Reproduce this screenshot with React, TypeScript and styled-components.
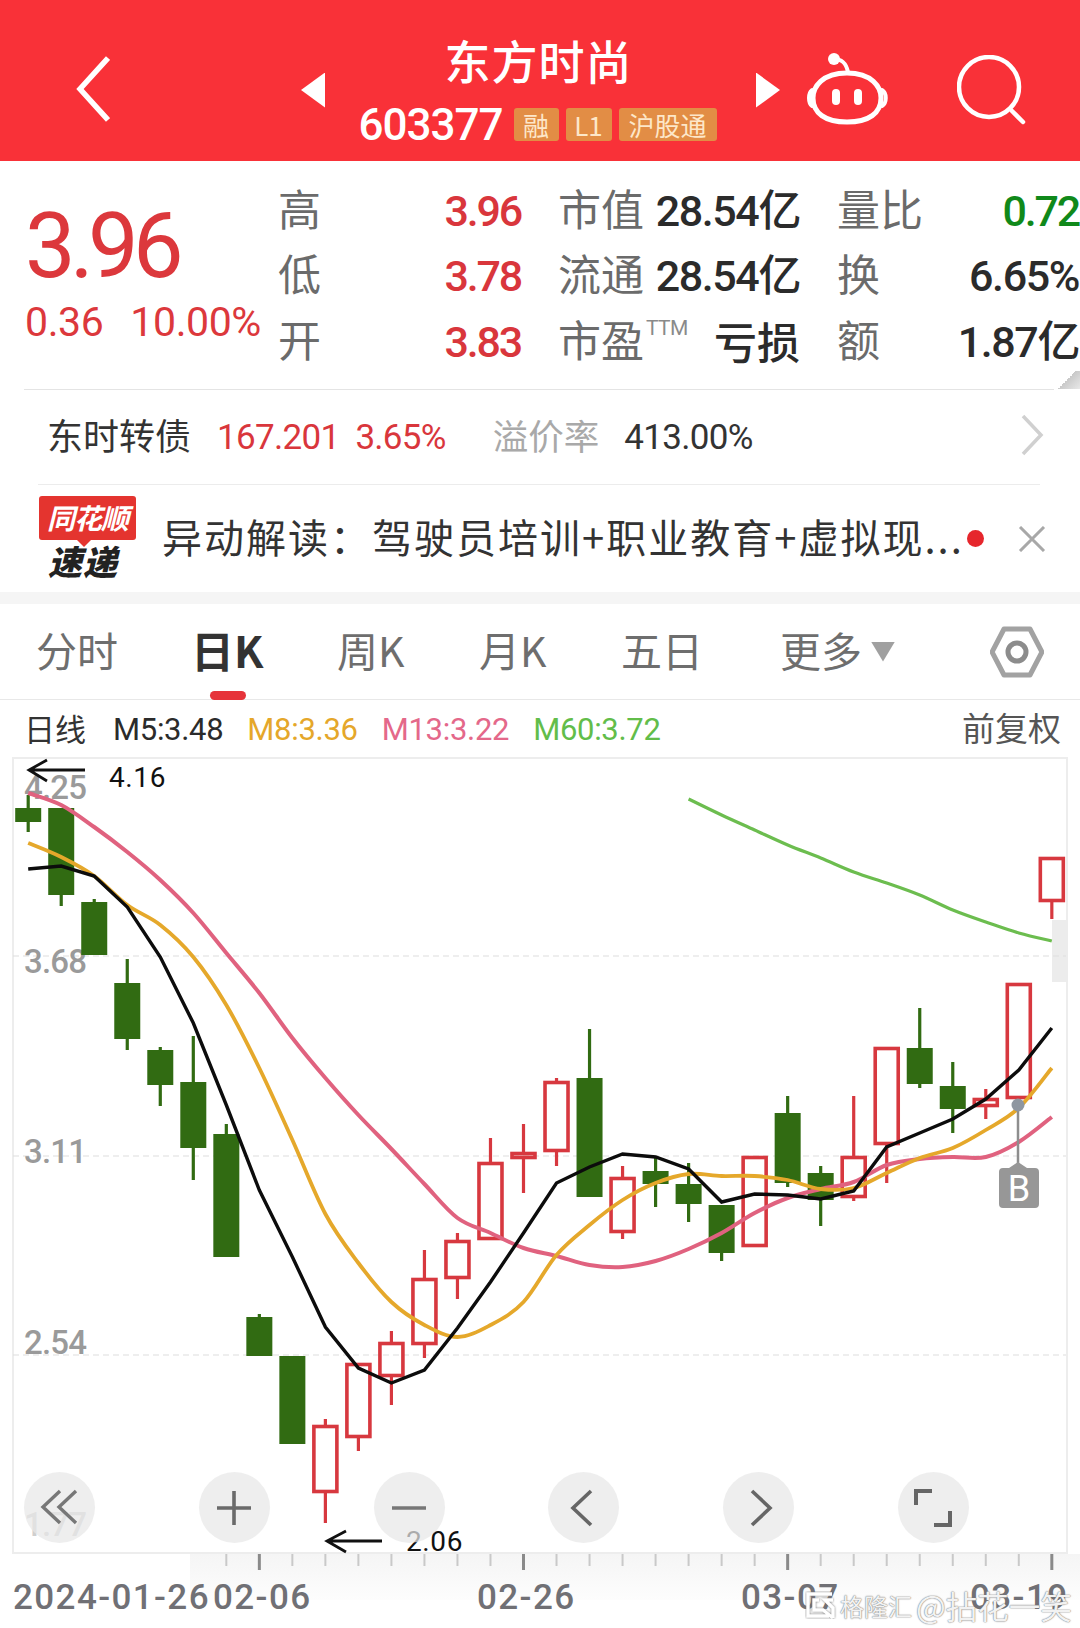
import React from "react";
import styled, { createGlobalStyle } from "styled-components";

const CJK = `"Noto Sans CJK SC", "Noto Sans", sans-serif`;
const NUM = `Roboto, "Noto Sans CJK SC", sans-serif`;
const RED = "#d9363c";

const Global = createGlobalStyle`
  html, body { margin: 0; padding: 0; background: #fff; }
  body { width: 1080px; height: 1628px; overflow: hidden; font-family: ${CJK}; }
`;

const Page = styled.div`
  width: 1080px;
  height: 1628px;
  position: relative;
  overflow: hidden;
  background: #fff;
`;

/* ---------- header ---------- */
const Header = styled.header`
  height: 161px;
  box-sizing: border-box;
  padding: 16px 0 0 76px;
  background: #f93138;
  display: flex;
  align-items: center;
  color: #fff;
`;
const BackIcon = styled.svg`
  width: 34px;
  height: 66px;
  margin-right: 191px;
  flex: none;
`;
const Triangle = styled.div<{ $dir: "l" | "r" }>`
  width: 24px;
  height: 35px;
  flex: none;
  margin-top: 3px;
  background: #fff;
  clip-path: ${(p) => (p.$dir === "l" ? "polygon(100% 0, 0 50%, 100% 100%)" : "polygon(0 0, 100% 50%, 0 100%)")};
`;
const TitleBlock = styled.div`
  width: 431px;
  flex: none;
  display: flex;
  flex-direction: column;
  align-items: center;
  margin-top: -3px;
`;
const Title = styled.div`
  font-size: 46px;
  line-height: 52px;
  letter-spacing: 1px;
  font-weight: 500;
  margin-left: -4px;
`;
const CodeRow = styled.div`
  display: flex;
  align-items: center;
  margin-top: 23px;
  height: 34px;
  margin-left: 1px;
`;
const Code = styled.span`
  font-family: ${NUM};
  font-size: 44px;
  font-weight: 500;
  letter-spacing: -1px;
  margin-right: 11px;
  line-height: 34px;
`;
const Badge = styled.span<{ $w: number }>`
  width: ${(p) => p.$w}px;
  height: 33px;
  margin-right: 7px;
  background: #e28d45;
  border-radius: 3px;
  color: #fde7c9;
  font-size: 26px;
  line-height: 33px;
  text-align: center;
  white-space: nowrap;
`;
const RobotIcon = styled.svg`
  width: 82px;
  height: 75px;
  margin-left: 26px;
  margin-top: 4px;
  flex: none;
`;
const SearchIcon = styled.svg`
  width: 70px;
  height: 70px;
  margin-left: 69px;
  margin-top: 2px;
  flex: none;
`;

/* ---------- quote ---------- */
const Quote = styled.section`
  position: relative;
  height: 228px;
  display: flex;
`;
const PriceCol = styled.div`
  width: 280px;
  flex: none;
  box-sizing: border-box;
  padding: 44px 0 0 25px;
  color: #dc383c;
  font-family: ${NUM};
`;
const BigPrice = styled.div`
  font-size: 90px;
  line-height: 84px;
  letter-spacing: -5.6px;
`;
const PriceSub = styled.div`
  display: flex;
  gap: 27px;
  font-size: 41px;
  line-height: 48px;
  letter-spacing: -0.4px;
  margin-top: 9px;
  white-space: nowrap;
`;
const Stats = styled.div`
  display: grid;
  grid-template-columns: 241px 240px 240px;
  grid-auto-rows: 65.5px;
  column-gap: 39px;
  padding-top: 16px;
`;
const Stat = styled.div`
  display: flex;
  justify-content: space-between;
  align-items: center;
  white-space: nowrap;
`;
const StatLabel = styled.span`
  font-size: 43px;
  color: #6b6b6b;
  display: flex;
  align-items: flex-start;
  line-height: 50px;
  margin: -6px 0 0 -2px;
`;
const Sup = styled.sup`
  font-family: ${NUM};
  font-size: 21px;
  line-height: 24px;
  color: #8a8a8a;
  margin: 3px 0 0 2px;
  vertical-align: baseline;
  letter-spacing: -0.6px;
`;
const StatValue = styled.span<{ $c?: string }>`
  font-family: ${NUM};
  font-size: 43px;
  font-weight: 500;
  line-height: 50px;
  margin-top: 2px;
  letter-spacing: ${(p) => (p.$c ? "-2.2px" : "-1.4px")};
  color: ${(p) => p.$c || "#2b2b2b"};
`;
const StatText = styled.span`
  font-size: 43px;
  font-weight: 500;
  line-height: 50px;
  margin-top: -2px;
  color: #2b2b2b;
`;
const CornerFold = styled.div`
  position: absolute;
  right: 0;
  bottom: 0;
  width: 26px;
  height: 18px;
  background: linear-gradient(135deg, #fff 50%, #c9c9c9 50%, #e8e8e8 100%);
`;

/* ---------- bond ---------- */
const BondRow = styled.div`
  margin: 0 26px 0 24px;
  border-top: 1px solid #e4e4e4;
  height: 95px;
  box-sizing: border-box;
  display: flex;
  align-items: center;
  padding-left: 23px;
  white-space: nowrap;
`;
const BondName = styled.span`
  font-size: 36px;
  color: #333;
  margin: -6px 26px 0 0;
`;
const BondNum = styled.span<{ $c: string; $mr: number }>`
  font-family: ${NUM};
  font-size: 35px;
  letter-spacing: -0.7px;
  color: ${(p) => p.$c};
  margin-right: ${(p) => p.$mr}px;
`;
const BondGray = styled.span`
  font-size: 35.5px;
  color: #a9a9a9;
  margin: -6px 25px 0 0;
`;
const BondChevron = styled.svg`
  width: 24px;
  height: 42px;
  margin: -4px 10px 0 auto;
`;

/* ---------- news ---------- */
const NewsWrap = styled.div`
  height: 108px;
  box-sizing: border-box;
  margin: 0 40px 0 38px;
  border-top: 1px solid #ececec;
  display: flex;
  align-items: center;
  position: relative;
`;
const Logo = styled.div`
  width: 100px;
  flex: none;
  display: flex;
  flex-direction: column;
  align-items: center;
  margin-right: 24px;
  margin-top: -3px;
`;
const LogoFlag = styled.div`
  position: relative;
  width: 97px;
  height: 44px;
  margin-left: -1px;
  background: #e4342f;
  border-radius: 3px;
  color: #fff;
  font-size: 28px;
  font-weight: 700;
  font-style: italic;
  line-height: 42px;
  text-align: center;
  white-space: nowrap;
  letter-spacing: -1px;
  &::after {
    content: "";
    position: absolute;
    left: 38px;
    bottom: -7px;
    border: 7px solid transparent;
    border-bottom: 0;
    border-top-color: #e4342f;
  }
`;
const LogoBottom = styled.div`
  font-size: 34px;
  font-weight: 900;
  font-style: italic;
  color: #222;
  line-height: 34px;
  letter-spacing: 1px;
  margin-top: 4px;
  margin-left: -10px;
`;
const NewsText = styled.div`
  font-size: 40px;
  letter-spacing: 2px;
  color: #333;
  white-space: nowrap;
  width: 803px;
  flex: none;
  margin-top: -6px;
`;
const RedDot = styled.div`
  width: 17px;
  height: 17px;
  border-radius: 50%;
  background: #e6262c;
  flex: none;
  margin-left: 2px;
`;
const CloseIcon = styled.svg`
  width: 28px;
  height: 26px;
  flex: none;
  margin-left: 34px;
`;
const Band = styled.div`
  height: 12px;
  background: #f5f5f5;
`;

/* ---------- tabs ---------- */
const Tabs = styled.nav`
  height: 96px;
  box-sizing: border-box;
  border-bottom: 1px solid #e8e8e8;
  display: grid;
  grid-template-columns: 158px 143px 142px 142px 159px 210px 1fr;
  padding-left: 36px;
  align-items: center;
  position: relative;
`;
const Tab = styled.div<{ $active?: boolean }>`
  font-size: ${(p) => (p.$active ? 43 : 41)}px;
  line-height: 50px;
  margin: -5px 0 0 ${(p) => (p.$active ? -3 : 0)}px;
  white-space: nowrap;
  position: relative;
  display: flex;
  align-items: center;
  font-weight: ${(p) => (p.$active ? 700 : 400)};
  color: ${(p) => (p.$active ? "#333" : "#6e6e6e")};
`;
const TabIndicator = styled.div`
  position: absolute;
  left: 19px;
  top: 67px;
  width: 36px;
  height: 9px;
  border-radius: 5px;
  background: #e6333a;
`;
const Caret = styled.div`
  width: 24px;
  height: 20px;
  margin: 5px 0 0 9px;
  background: #a0a0a0;
  clip-path: polygon(0 0, 100% 0, 50% 100%);
`;
const HexIcon = styled.svg`
  width: 54px;
  height: 52px;
`;

/* ---------- legend ---------- */
const Legend = styled.div`
  height: 50px;
  display: flex;
  align-items: center;
  padding: 8px 19px 0 24px;
  box-sizing: border-box;
  white-space: nowrap;
`;
const LegendName = styled.span`
  font-size: 31px;
  color: #333;
  margin: -4px 27px 0 0;
`;
const LegendItem = styled.span<{ $c: string }>`
  font-family: ${NUM};
  font-size: 31px;
  letter-spacing: -0.3px;
  color: ${(p) => p.$c};
  margin-right: 24px;
`;
const LegendRight = styled.span`
  font-size: 33px;
  color: #555;
  margin: -4px 0 0 auto;
`;

/* ---------- chart ---------- */
const ChartArea = styled.div`
  position: relative;
  height: 878px;
`;
const ChartSvg = styled.svg`
  display: block;
  width: 1080px;
  height: 878px;
`;
const Controls = styled.div`
  position: absolute;
  left: 24px;
  top: 722px;
  width: 945px;
  display: flex;
  justify-content: space-between;
`;
const Ctrl = styled.div`
  width: 71px;
  height: 71px;
  border-radius: 50%;
  background: rgba(232, 232, 232, 0.72);
  display: flex;
  align-items: center;
  justify-content: center;
`;
const CtrlIcon = styled.svg`
  width: 40px;
  height: 40px;
`;
const Watermark = styled.div`
  position: absolute;
  left: 805px;
  top: 840px;
  height: 30px;
  display: flex;
  align-items: center;
  color: rgba(255, 255, 255, 0.92);
  text-shadow: 0 0 1.5px #777, 0 0 1px #888;
  white-space: nowrap;
`;
const WmSvg = styled.svg`
  width: 32px;
  height: 28px;
  margin-right: 3px;
`;
const WmSmall = styled.span`
  font-size: 24px;
`;
const WmLarge = styled.span`
  font-size: 31.5px;
  margin-left: 4px;
`;

/* ---------- data ---------- */
type C = [number, number, number, number, "g" | "r"];
const candles: C[] = [
  [808, 822, 795, 832, "g"],
  [808, 895, 808, 906, "g"],
  [902, 955, 899, 955, "g"],
  [983, 1039, 959, 1050, "g"],
  [1050, 1085, 1047, 1106, "g"],
  [1082, 1148, 1036, 1180, "g"],
  [1134, 1257, 1124, 1257, "g"],
  [1317, 1356, 1314, 1356, "g"],
  [1356, 1444, 1356, 1444, "g"],
  [1425, 1493, 1419, 1523, "r"],
  [1363, 1438, 1363, 1451, "r"],
  [1342, 1377, 1331, 1405, "r"],
  [1278, 1345, 1250, 1358, "r"],
  [1240, 1279, 1233, 1299, "r"],
  [1162, 1240, 1138, 1240, "r"],
  [1152, 1159, 1124, 1193, "r"],
  [1081, 1152, 1078, 1166, "r"],
  [1078, 1197, 1029, 1197, "g"],
  [1177, 1233, 1166, 1239, "r"],
  [1171, 1184, 1158, 1207, "g"],
  [1184, 1204, 1163, 1222, "g"],
  [1205, 1253, 1205, 1261, "g"],
  [1156, 1247, 1156, 1247, "r"],
  [1113, 1183, 1096, 1187, "g"],
  [1173, 1200, 1166, 1226, "g"],
  [1156, 1198, 1096, 1201, "r"],
  [1047, 1145, 1047, 1183, "r"],
  [1048, 1084, 1008, 1088, "g"],
  [1086, 1109, 1062, 1133, "g"],
  [1098, 1107, 1089, 1119, "r"],
  [983, 1099, 983, 1103, "r"],
  [857, 902, 857, 919, "r"],
];
const X = (i: number) => 28.2 + 33.02 * i;
const line = (ys: number[], start = 0) => ys.map((y, i) => `${X(i + start).toFixed(1)},${y}`).join(" ");
const smooth = (ys: number[], start = 0) => {
  const pts = ys.map((y, i) => [X(i + start), y]);
  let d = `M${pts[0][0].toFixed(1)} ${pts[0][1]}`;
  for (let i = 0; i < pts.length - 1; i++) {
    const a = pts[Math.max(i - 1, 0)];
    const b = pts[i];
    const c = pts[i + 1];
    const e = pts[Math.min(i + 2, pts.length - 1)];
    d += ` C${(b[0] + (c[0] - a[0]) / 6).toFixed(1)} ${(b[1] + (c[1] - a[1]) / 6).toFixed(1)} ${(c[0] - (e[0] - b[0]) / 6).toFixed(1)} ${(c[1] - (e[1] - b[1]) / 6).toFixed(1)} ${c[0].toFixed(1)} ${c[1]}`;
  }
  return d;
};

const black = [869, 866, 876, 907, 957, 1023, 1105, 1190, 1257, 1327, 1368, 1383, 1370, 1328, 1282, 1233, 1183, 1167, 1154, 1157, 1169, 1202, 1194, 1195, 1199, 1191, 1147, 1133, 1119, 1099, 1070, 1028];
const yellow = [843, 857, 876, 905, 925, 957, 1005, 1068, 1140, 1214, 1263, 1302, 1325, 1337, 1325, 1302, 1255, 1225, 1200, 1183, 1174, 1176, 1176, 1180, 1189, 1188, 1173, 1158, 1148, 1130, 1108, 1068];
const pink = [793, 805, 827, 852, 880, 913, 953, 993, 1038, 1078, 1115, 1149, 1184, 1218, 1233, 1248, 1256, 1265, 1267, 1261, 1249, 1233, 1213, 1198, 1189, 1182, 1165, 1159, 1157, 1157, 1142, 1117];
const green = [799, 815, 830, 845, 858, 872, 883, 895, 910, 922, 933, 941];

const yLabels: [string, number][] = [["4.25", 799], ["3.68", 973], ["3.11", 1163], ["2.54", 1354], ["1.77", 1536]];
const dates: [string, number][] = [["2024-01-26", 13], ["02-06", 213], ["02-26", 477], ["03-07", 741], ["03-19", 970]];

export default function App() {
  return (
    <Page>
      <Global />
      <Header>
        <BackIcon viewBox="0 0 34 66">
          <path d="M32 2 L4 33 L32 64" fill="none" stroke="#fff" strokeWidth="5.5" />
        </BackIcon>
        <Triangle $dir="l" />
        <TitleBlock>
          <Title>东方时尚</Title>
          <CodeRow>
            <Code>603377</Code>
            <Badge $w={45}>融</Badge>
            <Badge $w={46}>L1</Badge>
            <Badge $w={98}>沪股通</Badge>
          </CodeRow>
        </TitleBlock>
        <Triangle $dir="r" />
        <RobotIcon viewBox="806 52 82 75">
          <path d="M834 58 C842 58 846 62 848 71" fill="none" stroke="#fff" strokeWidth="4" strokeLinecap="round" />
          <circle cx="834" cy="58" r="6" fill="#fff" />
          <path d="M847 72 C872 72 881 86 881 97 C881 112 869 121 847 121 C825 121 813 112 813 97 C813 86 822 72 847 72 Z" fill="none" stroke="#fff" strokeWidth="5" />
          <path d="M812 89 C808 92 808 102 812 105 M882 89 C887 92 887 102 882 105" fill="none" stroke="#fff" strokeWidth="4" strokeLinecap="round" />
          <rect x="832" y="88" width="8" height="16" rx="4" fill="#fff" />
          <rect x="854" y="88" width="8" height="16" rx="4" fill="#fff" />
        </RobotIcon>
        <SearchIcon viewBox="957 55 70 70">
          <circle cx="989" cy="87" r="30" fill="none" stroke="#fff" strokeWidth="4.5" />
          <path d="M1012 111 L1023 122" stroke="#fff" strokeWidth="4.5" strokeLinecap="round" />
        </SearchIcon>
      </Header>

      <Quote>
        <PriceCol>
          <BigPrice>3.96</BigPrice>
          <PriceSub>
            <span>0.36</span>
            <span>10.00%</span>
          </PriceSub>
        </PriceCol>
        <Stats>
          <Stat><StatLabel>高</StatLabel><StatValue $c={RED}>3.96</StatValue></Stat>
          <Stat><StatLabel>市值</StatLabel><StatValue>28.54亿</StatValue></Stat>
          <Stat><StatLabel>量比</StatLabel><StatValue $c="#10891a">0.72</StatValue></Stat>
          <Stat><StatLabel>低</StatLabel><StatValue $c={RED}>3.78</StatValue></Stat>
          <Stat><StatLabel>流通</StatLabel><StatValue>28.54亿</StatValue></Stat>
          <Stat><StatLabel>换</StatLabel><StatValue>6.65%</StatValue></Stat>
          <Stat><StatLabel>开</StatLabel><StatValue $c={RED}>3.83</StatValue></Stat>
          <Stat><StatLabel>市盈<Sup>TTM</Sup></StatLabel><StatText>亏损</StatText></Stat>
          <Stat><StatLabel>额</StatLabel><StatValue>1.87亿</StatValue></Stat>
        </Stats>
        <CornerFold />
      </Quote>

      <BondRow>
        <BondName>东时转债</BondName>
        <BondNum $c={RED} $mr={16}>167.201</BondNum>
        <BondNum $c={RED} $mr={47}>3.65%</BondNum>
        <BondGray>溢价率</BondGray>
        <BondNum $c="#333" $mr={0}>413.00%</BondNum>
        <BondChevron viewBox="0 0 24 42">
          <path d="M3 2 L21 21 L3 40" fill="none" stroke="#d0d0d0" strokeWidth="3.5" />
        </BondChevron>
      </BondRow>

      <NewsWrap>
        <Logo>
          <LogoFlag>同花顺</LogoFlag>
          <LogoBottom>速递</LogoBottom>
        </Logo>
        <NewsText>异动解读：驾驶员培训+职业教育+虚拟现...</NewsText>
        <RedDot />
        <CloseIcon viewBox="0 0 28 26">
          <path d="M2 1 L26 25 M26 1 L2 25" stroke="#a8a8a8" strokeWidth="3" fill="none" />
        </CloseIcon>
      </NewsWrap>
      <Band />

      <Tabs>
        <Tab>分时</Tab>
        <Tab $active>日K<TabIndicator /></Tab>
        <Tab>周K</Tab>
        <Tab>月K</Tab>
        <Tab>五日</Tab>
        <Tab>更多<Caret /></Tab>
        <HexIcon viewBox="0 0 54 52">
          <path d="M14 3 H40 L52 26 L40 49 H14 L2 26 Z" fill="none" stroke="#a2a2a2" strokeWidth="5" strokeLinejoin="round" />
          <circle cx="27" cy="26" r="9" fill="none" stroke="#8c8c8c" strokeWidth="5" />
        </HexIcon>
      </Tabs>

      <Legend>
        <LegendName>日线</LegendName>
        <LegendItem $c="#2b2b2b">M5:3.48</LegendItem>
        <LegendItem $c="#e5a72a">M8:3.36</LegendItem>
        <LegendItem $c="#e4688a">M13:3.22</LegendItem>
        <LegendItem $c="#62bd4a">M60:3.72</LegendItem>
        <LegendRight>前复权</LegendRight>
      </Legend>

      <ChartArea>
        <ChartSvg viewBox="0 750 1080 878">
          <defs>
            <linearGradient id="bandFade" x1="0" x2="0" y1="0" y2="1">
              <stop offset="0" stopColor="#f5f5f5" />
              <stop offset="1" stopColor="#fdfdfd" />
            </linearGradient>
          </defs>
          <rect x="190" y="1554" width="890" height="46" fill="url(#bandFade)" />
          <rect x="13" y="758" width="1054" height="795" fill="#fff" stroke="#ededed" strokeWidth="2" />
          <rect x="1052" y="920" width="16" height="62" fill="#ececec" />
          {[956, 1156, 1355].map((y) => (
            <line key={y} x1="13" x2="1066" y1={y} y2={y} stroke="#ddd" strokeWidth="1.2" strokeDasharray="6 4" />
          ))}
          {yLabels.map(([t, y]) => (
            <text key={t} x="24" y={y} fontFamily="Roboto, sans-serif" fontSize="33" fontWeight="500" letterSpacing="-0.8" fill={t === "1.77" ? "#cfcfcf" : "#9a9a9a"}>
              {t}
            </text>
          ))}
          {candles.map(([bt, bb, wt, wb, k], i) => {
            const x = X(i);
            const col = k === "g" ? "#316b12" : "#d7383f";
            return (
              <g key={i}>
                {wt < bt && <line x1={x} x2={x} y1={wt} y2={bt} stroke={col} strokeWidth="3.2" />}
                {wb > bb && <line x1={x} x2={x} y1={bb} y2={wb} stroke={col} strokeWidth="3.2" />}
                {k === "g" ? (
                  <rect x={x - 13} y={bt} width="26" height={bb - bt} fill={col} />
                ) : (
                  <rect x={x - 11.5} y={bt + 1.5} width="23" height={Math.max(bb - bt - 3, 1)} fill="none" stroke={col} strokeWidth="3.6" />
                )}
              </g>
            );
          })}
          <path d={smooth(green, 20)} fill="none" stroke="#6cbd4f" strokeWidth="3.2" />
          <path d={smooth(pink)} fill="none" stroke="#e0627f" strokeWidth="4" />
          <path d={smooth(yellow)} fill="none" stroke="#e5a82b" strokeWidth="3.8" />
          <polyline points={line(black)} fill="none" stroke="#0c0c0c" strokeWidth="3.4" />

          <line x1="1018" x2="1018" y1="1105" y2="1166" stroke="#8e8e8e" strokeWidth="2.5" />
          <circle cx="1018" cy="1105" r="6.5" fill="#8e96a0" />
          <path d="M1009 1168 L1018 1162 L1027 1168 H1035 a4 4 0 0 1 4 4 V1204 a4 4 0 0 1 -4 4 H1003 a4 4 0 0 1 -4 -4 V1172 a4 4 0 0 1 4 -4 Z" fill="#979797" />
          <text x="1019" y="1201" textAnchor="middle" fontFamily="Roboto, sans-serif" fontSize="36" fill="#fff">B</text>

          <path d="M85 770 H30 M47 760 L29 770 L47 781" fill="none" stroke="#111" strokeWidth="2.8" />
          <text x="109" y="787" fontFamily="Roboto, sans-serif" fontSize="28" fill="#111" letterSpacing="0.6">4.16</text>
          <path d="M382 1541 H327 M346 1531 L327 1541 L346 1552" fill="none" stroke="#111" strokeWidth="2.8" />
          <text x="406" y="1551" fontFamily="Roboto, sans-serif" fontSize="28" fill="#111" letterSpacing="0.6">2.06</text>

          {candles.map((_, i) => {
            if (i < 6) return null;
            const major = (i - 7) % 8 === 0;
            return (
              <line key={i} x1={X(i)} x2={X(i)} y1="1554" y2={major ? 1570 : 1566} stroke={major ? "#8a8a8a" : "#c9c9c9"} strokeWidth={major ? 3 : 2} />
            );
          })}
          {dates.map(([t, x]) => (
            <text key={t} x={x} y="1609" fontFamily="Roboto, sans-serif" fontSize="35" fontWeight="500" fill="#707075" letterSpacing="1.4">
              {t}
            </text>
          ))}
        </ChartSvg>
        <Controls>
          <Ctrl>
            <CtrlIcon viewBox="0 0 40 40">
              <path d="M20 3 L3 19 L20 35 M36 3 L19 19 L36 35" fill="none" stroke="#777" strokeWidth="3.4" />
            </CtrlIcon>
          </Ctrl>
          <Ctrl>
            <CtrlIcon viewBox="0 0 40 40">
              <path d="M3 20 H37 M20 3 V37" fill="none" stroke="#6a6a6a" strokeWidth="3.6" />
            </CtrlIcon>
          </Ctrl>
          <Ctrl>
            <CtrlIcon viewBox="0 0 40 40">
              <path d="M3 20 H37" fill="none" stroke="#777" strokeWidth="3.6" />
            </CtrlIcon>
          </Ctrl>
          <Ctrl>
            <CtrlIcon viewBox="0 0 40 40">
              <path d="M27 3 L9 20 L27 37" fill="none" stroke="#666" strokeWidth="3.6" />
            </CtrlIcon>
          </Ctrl>
          <Ctrl>
            <CtrlIcon viewBox="0 0 40 40">
              <path d="M13 3 L31 20 L13 37" fill="none" stroke="#666" strokeWidth="3.6" />
            </CtrlIcon>
          </Ctrl>
          <Ctrl>
            <CtrlIcon viewBox="0 0 40 40">
              <path d="M3 17 V3 H19 M37 23 V37 H21" fill="none" stroke="#666" strokeWidth="4" />
            </CtrlIcon>
          </Ctrl>
        </Controls>
        <Watermark>
          <WmSvg viewBox="0 0 32 28">
            <path d="M27 3 H3 V25 H24 M14 9 H9 V19 H18 L28 27 M28 9 H20 L28 17 V27" fill="none" stroke="#fff" strokeWidth="3.4" style={{ filter: "drop-shadow(0 0 1px #777)" }} />
          </WmSvg>
          <WmSmall>格隆汇</WmSmall>
          <WmLarge>@拈花一笑</WmLarge>
        </Watermark>
      </ChartArea>
    </Page>
  );
}
